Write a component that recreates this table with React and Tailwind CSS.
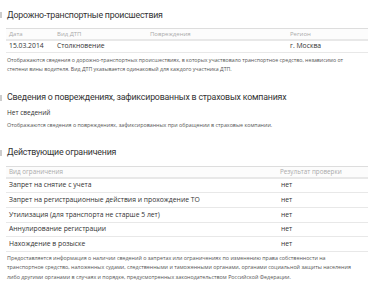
export default function App() {
  const restrictions = [
    'Запрет на снятие с учета',
    'Запрет на регистрационные действия и прохождение ТО',
    'Утилизация (для транспорта не старше 5 лет)',
    'Аннулирование регистрации',
    'Нахождение в розыске',
  ];

  const heading = "ml-[5px] text-[8.8px] leading-none tracking-[-0.2px] text-[#333] font-['Roboto',sans-serif]";

  return (
    <div className="w-[380px] h-[285px] overflow-hidden bg-white text-[#333] font-['Open_Sans',sans-serif]">
      <div className="pr-[12px]">
        {/* ДТП */}
        <div className="flex items-center h-[20px] mt-[5px]">
          <div className="w-[2px] h-[6px] bg-[#ccc]" />
          <h2 className={heading}>Дорожно-транспортные происшествия</h2>
        </div>
        <div className="ml-[6px] mt-[3px] border-t border-[#ddd]">
          <div className="flex h-[12px] items-center border-b-2 border-[#e8e8e8] bg-[#fcfcfc] text-[6px] text-[#aaa]">
            <div className="w-[51px] pl-[3px]">Дата</div>
            <div className="w-[93px]">Вид ДТП</div>
            <div className="w-[140px]">Повреждения</div>
            <div>Регион</div>
          </div>
          <div className="flex h-[12px] items-center border-b border-[#e8e8e8] text-[6.8px]">
            <div className="w-[51px] pl-[3px]">15.03.2014</div>
            <div className="w-[93px]">Столкновение</div>
            <div className="w-[140px]"></div>
            <div>г. Москва</div>
          </div>
        </div>
        <p className="ml-[7px] mt-[3px] whitespace-nowrap text-[5.25px] leading-[9px] text-[#555]">
          Отображаются сведения о дорожно-транспортных происшествиях, в которых участвовало транспортное средство, независимо от
          <br />
          степени вины водителя. Вид ДТП указывается одинаковый для каждого участника ДТП.
        </p>

        {/* Страховые */}
        <div className="flex items-center h-[20px] mt-[13.5px]">
          <div className="w-[2px] h-[6px] bg-[#ccc]" />
          <h2 className={heading}>Сведения о повреждениях, зафиксированных в страховых компаниях</h2>
        </div>
        <div className="ml-[7px] mt-[0.5px] text-[6.5px] leading-[9px]">Нет сведений</div>
        <p className="ml-[7px] mt-[4px] whitespace-nowrap text-[5.35px] leading-[9px] text-[#555]">
          Отображаются сведения о повреждениях, зафиксированных при обращении в страховые компании.
        </p>

        {/* Ограничения */}
        <div className="flex items-center h-[20px] mt-[12.5px]">
          <div className="w-[2px] h-[6px] bg-[#ccc]" />
          <h2 className={heading}>Действующие ограничения</h2>
        </div>
        <div className="ml-[6px] mt-[3px] border-t border-[#ddd]">
          <div className="flex h-[12px] items-center border-b-2 border-[#e8e8e8] bg-[#fcfcfc] text-[6.3px] text-[#aaa]">
            <div className="w-[274px] pl-[3px]">Вид ограничения</div>
            <div>Результат проверки</div>
          </div>
          {restrictions.map((r) => (
            <div key={r} className="flex h-[14.7px] items-center border-b border-[#e8e8e8] text-[6.8px]">
              <div className="w-[275px] pl-[3px]">{r}</div>
              <div>нет</div>
            </div>
          ))}
        </div>
        <p className="ml-[7px] mt-[2px] whitespace-nowrap text-[5.35px] leading-[9.5px] text-[#555]">
          Предоставляется информация о наличии сведений о запретах или ограничениях по изменению права собственности на
          <br />
          транспортное средство, наложенных судами, следственными и таможенными органами, органами социальной защиты населения
          <br />
          либо другими органами в случаях и порядке, предусмотренных законодательством Российской Федерации.
        </p>
      </div>
    </div>
  );
}
